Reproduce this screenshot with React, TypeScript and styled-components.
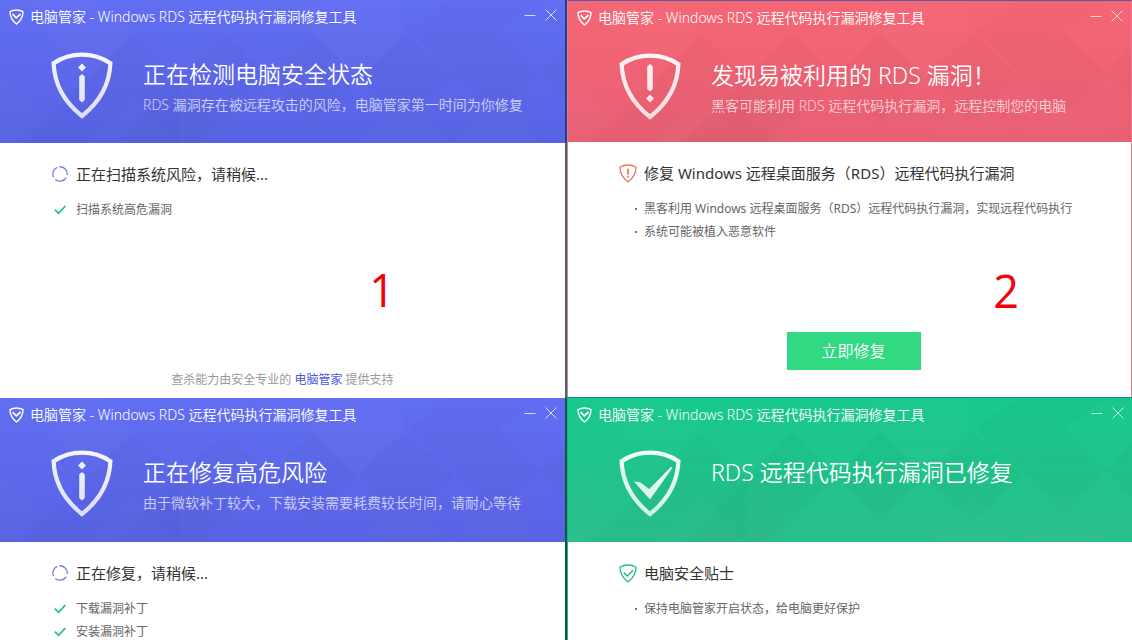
import React from "react";
import styled, { createGlobalStyle } from "styled-components";

type Tone = "scan" | "danger" | "safe";

const tones: Record<Tone, { from: string; to: string; edge: string; side: string }> = {
  scan: { from: "#626ef1", to: "#5863e4", edge: "#626ef1", side: "#ffffff" },
  danger: { from: "#f56675", to: "#e86073", edge: "#5b5a9e", side: "#e8788c" },
  safe: { from: "#18c98c", to: "#29be8c", edge: "#1f7d9c", side: "#1fae80" },
};

const GlobalStyle = createGlobalStyle`
  * { box-sizing: border-box; }
  body {
    margin: 0;
    background: #fff;
    font-family: "Noto Sans", "Noto Sans CJK SC", sans-serif;
  }
`;

const Board = styled.main`
  display: grid;
  grid-template-columns: 1fr 1fr;
  column-gap: 2px;
  min-height: 100vh;
  background: linear-gradient(#1f3f93 0, #1f3f93 142px, #426a70 143px, #426a70 397px, #0d5a48 398px);
`;

const Column = styled.div`
  display: flex;
  flex-direction: column;
  min-width: 0;
`;

const Panel = styled.section<{ $tone: Tone; $height?: number }>`
  position: relative;
  display: flex;
  flex-direction: column;
  flex: ${(p) => (p.$height ? "none" : "1")};
  min-height: ${(p) => (p.$height ? `${p.$height}px` : "0")};
  background: #fff;
  border-style: solid;
  border-color: ${(p) => `${tones[p.$tone].edge} ${tones[p.$tone].side} transparent`};
  border-width: ${(p) =>
    p.$tone === "scan" ? "0" : p.$tone === "danger" ? "1px 1px 0" : "1px 0 0 1px"};
`;

const Header = styled.header<{ $tone: Tone; $height: number }>`
  position: relative;
  min-height: ${(p) => p.$height}px;
  color: #fff;
  background: linear-gradient(${(p) => tones[p.$tone].from}, ${(p) => tones[p.$tone].to});
`;

const Facets = styled.svg`
  position: absolute;
  inset: 0;
  width: 100%;
  height: 100%;
`;

const TitleBar = styled.div`
  position: relative;
  display: flex;
  align-items: center;
  gap: 6px;
  height: 34px;
  padding: 0 8px 0 9px;
`;

const TitleText = styled.span`
  flex: 1;
  font-size: 14px;
  font-weight: 350;
  line-height: 20px;
  white-space: nowrap;
`;

const Controls = styled.div`
  display: flex;
  gap: 9px;
  padding-bottom: 4px;
`;

const ControlButton = styled.button`
  display: flex;
  padding: 0;
  border: 0;
  color: inherit;
  background: none;
  opacity: 0.75;
  cursor: pointer;
`;

const Hero = styled.div`
  position: relative;
  display: flex;
  gap: 30px;
  padding: 18px 16px 0 51px;
`;

const HeroText = styled.div`
  display: flex;
  flex-direction: column;
  gap: 6px;
  padding-top: 7px;
`;

const Heading = styled.h1`
  margin: 0;
  font-size: 23px;
  font-weight: 350;
  line-height: 30px;
  white-space: nowrap;
`;

const SubHeading = styled.p`
  margin: 0;
  font-size: 14px;
  font-weight: 350;
  line-height: 20px;
  white-space: nowrap;
  opacity: 0.7;
`;

const Body = styled.div`
  display: flex;
  flex: 1;
  flex-direction: column;
  padding: 19px 51px 0;
`;

const Row = styled.div`
  display: flex;
  align-items: center;
  gap: 7px;
`;

const Slot = styled.span<{ $end?: boolean }>`
  display: flex;
  flex: none;
  justify-content: ${(p) => (p.$end ? "flex-end" : "center")};
  width: 18px;
`;

const StatusTitle = styled.h2`
  margin: 0;
  color: #333;
  font-size: 15px;
  font-weight: 400;
  line-height: 24px;
  white-space: nowrap;
`;

const Items = styled.ul`
  display: flex;
  flex-direction: column;
  gap: 7px;
  margin: 16px 0 0;
  padding: 0;
  list-style: none;
`;

const Item = styled(Row).attrs({ as: "li" })`
  color: #666;
  font-size: 12px;
  line-height: 16px;
  white-space: nowrap;
`;

const Bullet = styled.span`
  width: 2px;
  height: 2px;
  background: #777;
`;

const Credit = styled.p`
  margin: auto 0 10px;
  color: #999;
  font-size: 12px;
  line-height: 16px;
  text-align: center;
`;

const CreditLink = styled.a`
  color: #4d58d8;
  text-decoration: none;
`;

const Action = styled.div`
  display: flex;
  justify-content: center;
  margin-top: auto;
  padding: 0 0 27px 8px;
`;

const FixButton = styled.button`
  width: 134px;
  height: 38px;
  padding: 0 0 2px;
  border: 0;
  color: #fff;
  background: #30d982;
  font-family: inherit;
  font-size: 16px;
  font-weight: 350;
  cursor: pointer;
`;

const StepNumber = styled.span<{ $right: number }>`
  position: absolute;
  top: 260px;
  right: ${(p) => p.$right}px;
  width: 26px;
  color: #f40009;
  font-family: "Open Sans", "Noto Sans", sans-serif;
  font-size: 45px;
  font-weight: 500;
  line-height: 60px;
  text-align: center;
`;

const shieldPath =
  "M31 2.6C21 2.6 11 5.5 2.6 11.2C3.4 31 12.5 49.5 31 64C49.5 49.5 58.6 31 59.4 11.2C51 5.5 41 2.6 31 2.6Z";

function BrandIcon() {
  return (
    <svg width="15" height="16" viewBox="0 0 15 16" fill="none" stroke="#fff" strokeWidth="1.4">
      <path d="M7.5 1C5 1 2.8 1.6 1 2.7C1 7.6 3.4 11.8 7.5 15C11.6 11.8 14 7.6 14 2.7C12.2 1.6 10 1 7.5 1Z" />
      <path d="M3.6 5.2L7.3 8.8L11.5 5" strokeWidth="1.7" />
    </svg>
  );
}

function HeroShield({ tone }: { tone: Tone }) {
  const fill = `shield-${tone}`;
  return (
    <svg width="62" height="67" viewBox="0 0 62 67" fill="none">
      <defs>
        <linearGradient id={fill} gradientUnits="userSpaceOnUse" x1="0" y1="0" x2="0" y2="67">
          <stop offset="0" stopColor="#fff" stopOpacity="0.94" />
          <stop offset="1" stopColor="#fff" stopOpacity="0.78" />
        </linearGradient>
      </defs>
      <path d={shieldPath} stroke={`url(#${fill})`} strokeWidth="4.2" />
      {tone === "scan" && (
        <path
          fill={`url(#${fill})`}
          d="M31 11.6L34.9 15.5L31 19.4L27.1 15.5ZM28.2 24.5L31 22L33.8 24.5V48L31 50.5L28.2 48Z"
        />
      )}
      {tone === "danger" && (
        <path
          fill={`url(#${fill})`}
          d="M28.2 13.5L31 11L33.8 13.5V36L31 38.5L28.2 36ZM31 41.6L34.9 45.5L31 49.4L27.1 45.5Z"
        />
      )}
      {tone === "safe" && (
        <path fill={`url(#${fill})`} d="M15 31.5L21 32.2L30.3 39L52 16.8L53.4 18L31 49.5Z" />
      )}
    </svg>
  );
}

function Spinner() {
  return (
    <svg width="16" height="16" viewBox="0 0 16 16" fill="none" stroke="#7780dc" strokeWidth="1.3">
      <path d="M1.6 11.2A7.2 7.2 0 0 1 5.2 1.4M7.2 .8A7.2 7.2 0 0 1 15.1 9M14.2 11.6A7.2 7.2 0 0 1 3.2 13.4" />
    </svg>
  );
}

function SmallShield({ tone }: { tone: Tone }) {
  const color = tone === "danger" ? "#ef7557" : "#27bd80";
  return (
    <svg width="18" height="19" viewBox="0 0 18 19" fill="none" stroke={color} strokeWidth="1.3">
      <path d="M9 1C6 1 3.2 1.8 .9 3.3C1.1 9 3.9 14.2 9 18C14.1 14.2 16.9 9 17.1 3.3C14.8 1.8 12 1 9 1Z" />
      {tone === "danger" ? (
        <path d="M9 4.8V10.4M9 11.8V13.6" strokeWidth="1.8" />
      ) : (
        <path d="M4.8 8.6L8.2 12L14 6.2" strokeWidth="1.5" />
      )}
    </svg>
  );
}

function CheckIcon() {
  return (
    <svg width="12" height="10" viewBox="0 0 12 10" fill="none" stroke="#20bf87" strokeWidth="1.7">
      <path d="M.9 4.6L4.6 8.3L11.3 1.2" />
    </svg>
  );
}

function HeaderFacets() {
  return (
    <Facets viewBox="0 0 565 143" preserveAspectRatio="none" aria-hidden="true">
      <g fill="#000" fillOpacity="0.014">
        <path d="M133 33L221 121L199 143H23Z" />
        <path d="M225 33L270 78L205 143H115L180 78Z" />
        <path d="M313 33L358 78L313 123L268 78Z" />
        <path d="M405 33L455 78L405 123L358 78Z" />
        <path d="M497 30L540 73L497 116L454 73Z" />
        <path d="M450 0H540L497 30L454 73L410 30Z" />
        <path d="M565 45V100L540 73Z" />
      </g>
      <g fill="#fff" fillOpacity="0.016">
        <path d="M0 75L42 116L15 143H0Z" />
        <path d="M40 0H100L133 33L90 76L20 0Z" />
        <path d="M313 0H400L405 33L358 78L290 12Z" />
        <path d="M133 98L178 143H88Z" />
        <path d="M405 98L450 143H360Z" />
        <path d="M497 98L542 143H452Z" />
        <path d="M180 78L225 123L205 143H180Z" />
      </g>
    </Facets>
  );
}

interface ToolHeaderProps {
  tone: Tone;
  height: number;
  heading: string;
  sub?: string;
}

function ToolHeader({ tone, height, heading, sub }: ToolHeaderProps) {
  return (
    <Header $tone={tone} $height={height}>
      <HeaderFacets />
      <TitleBar>
        <BrandIcon />
        <TitleText>电脑管家 - Windows RDS 远程代码执行漏洞修复工具</TitleText>
        <Controls>
          <ControlButton type="button" aria-label="最小化">
            <svg width="12" height="12" viewBox="0 0 12 12" stroke="currentColor">
              <path d="M.5 6.5H11.5" />
            </svg>
          </ControlButton>
          <ControlButton type="button" aria-label="关闭">
            <svg width="12" height="12" viewBox="0 0 12 12" stroke="currentColor">
              <path d="M.5 .5L11.5 11.5M11.5 .5L.5 11.5" />
            </svg>
          </ControlButton>
        </Controls>
      </TitleBar>
      <Hero>
        <HeroShield tone={tone} />
        <HeroText>
          <Heading>{heading}</Heading>
          {sub && <SubHeading>{sub}</SubHeading>}
        </HeroText>
      </Hero>
    </Header>
  );
}

interface StatusProps {
  icon: React.ReactNode;
  title: string;
  items: string[];
  checked?: boolean;
}

function Status({ icon, title, items, checked }: StatusProps) {
  return (
    <Body>
      <Row>
        <Slot>{icon}</Slot>
        <StatusTitle>{title}</StatusTitle>
      </Row>
      <Items>
        {items.map((text) => (
          <Item key={text}>
            <Slot $end={!checked}>{checked ? <CheckIcon /> : <Bullet />}</Slot>
            <span>{text}</span>
          </Item>
        ))}
      </Items>
    </Body>
  );
}

export default function App() {
  return (
    <>
      <GlobalStyle />
      <Board>
        <Column>
          <Panel $tone="scan" $height={398}>
            <ToolHeader
              tone="scan"
              height={143}
              heading="正在检测电脑安全状态"
              sub="RDS 漏洞存在被远程攻击的风险，电脑管家第一时间为你修复"
            />
            <Status icon={<Spinner />} title="正在扫描系统风险，请稍候..." items={["扫描系统高危漏洞"]} checked />
            <Credit>
              查杀能力由安全专业的 <CreditLink href="#">电脑管家</CreditLink> 提供支持
            </Credit>
            <StepNumber $right={170}>1</StepNumber>
          </Panel>
          <Panel $tone="scan">
            <ToolHeader
              tone="scan"
              height={144}
              heading="正在修复高危风险"
              sub="由于微软补丁较大，下载安装需要耗费较长时间，请耐心等待"
            />
            <Status icon={<Spinner />} title="正在修复，请稍候..." items={["下载漏洞补丁", "安装漏洞补丁"]} checked />
          </Panel>
        </Column>
        <Column>
          <Panel $tone="danger" $height={397}>
            <ToolHeader
              tone="danger"
              height={141}
              heading="发现易被利用的 RDS 漏洞！"
              sub="黑客可能利用 RDS 远程代码执行漏洞，远程控制您的电脑"
            />
            <Status
              icon={<SmallShield tone="danger" />}
              title="修复 Windows 远程桌面服务（RDS）远程代码执行漏洞"
              items={[
                "黑客利用 Windows 远程桌面服务（RDS）远程代码执行漏洞，实现远程代码执行",
                "系统可能被植入恶意软件",
              ]}
            />
            <Action>
              <FixButton type="button">立即修复</FixButton>
            </Action>
            <StepNumber $right={112}>2</StepNumber>
          </Panel>
          <Panel $tone="safe">
            <ToolHeader tone="safe" height={144} heading="RDS 远程代码执行漏洞已修复" />
            <Status
              icon={<SmallShield tone="safe" />}
              title="电脑安全贴士"
              items={["保持电脑管家开启状态，给电脑更好保护"]}
            />
          </Panel>
        </Column>
      </Board>
    </>
  );
}
